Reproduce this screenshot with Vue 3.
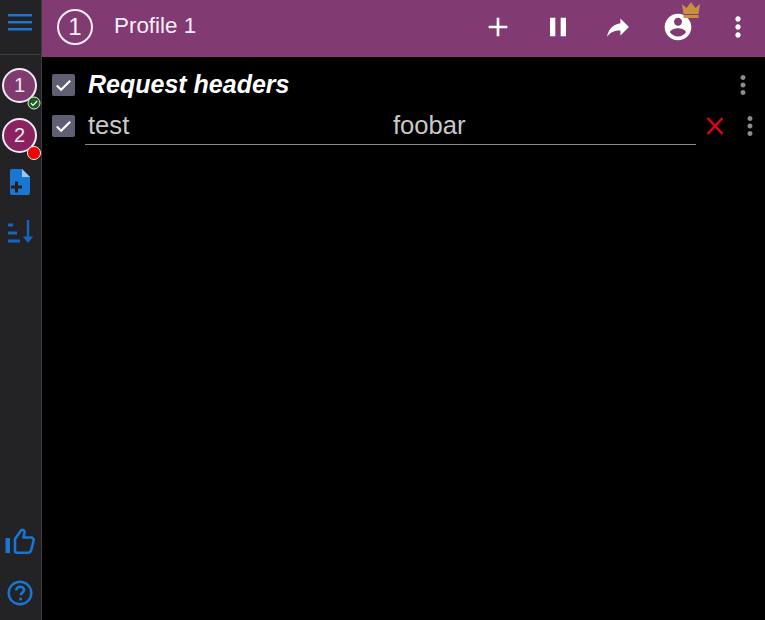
<script setup>
const rows = [{ name: 'test', value: 'foobar' }]
</script>

<template>
  <div class="app">
    <aside class="rail">
      <div class="rail-top">
        <svg class="menu" width="24" height="24" viewBox="0 0 24 24"><path d="M0 5h24v2.500H0zM0 12h24v2.500H0zM0 19h24v2.500H0z" fill="#1976d2"/></svg>
      </div>
      <div class="rail-list">
        <div class="pill one">1
          <span class="badge ok"><svg width="14" height="14" viewBox="0 0 14 14"><circle cx="7" cy="7" r="6" fill="#1b5e20" stroke="#e8e8e8" stroke-width="1"/><path d="M3.800 7.200l2.200 2.200 4.200-4.400" fill="none" stroke="#fff" stroke-width="1.200"/></svg></span>
        </div>
        <div class="pill two">2<span class="badge err"></span></div>
        <svg class="ico add" width="24" height="30" viewBox="0 0 24 30"><path d="M4 2h10l8 8v16a2 2 0 0 1-2 2H4a2 2 0 0 1-2-2V4a2 2 0 0 1 2-2z" fill="#1976d2"/><path d="M14 2l8 8h-8z" fill="#9ec6ee"/><path d="M7 14.500h3v4h4v3h-4v4H7v-4H3v-3h4z" fill="#202124"/></svg>
        <svg class="ico sort" width="28" height="24" viewBox="0 0 28 24"><path d="M2 3.500h5v3H2zM2 11.500h9v3H2zM2 19.500h12v3H2z" fill="#1565c0"/><path d="M20.800 0h2.400v16.500h4L22 23l-5.200-6.500h4z" fill="#1565c0"/></svg>
      </div>
      <div class="rail-bottom">
        <svg class="thumb" width="30" height="28" viewBox="0 0 30 28"><path d="M0.500 11h4.500v15H0.500z" fill="#1976d2"/><path d="M10 12l6-8.500c1.800-1.300 3.800-.2 3.500 2l-1 5h7.500c1.800 0 3 1.500 2.600 3.200l-2.400 9.300c-.4 1.600-1.500 2.800-3.200 2.800H12a2 2 0 0 1-2-2z" fill="none" stroke="#1976d2" stroke-width="2.600" stroke-linejoin="round"/></svg>
        <svg class="help" width="26" height="26" viewBox="0 0 26 26"><circle cx="13" cy="13" r="11.300" fill="none" stroke="#1976d2" stroke-width="2.400"/><path d="M9.300 10.500c0-2.300 1.700-3.800 3.900-3.800s3.800 1.400 3.800 3.300c0 2.600-3.300 2.900-3.300 5.300" fill="none" stroke="#1976d2" stroke-width="2.600"/><circle cx="13.600" cy="19" r="1.600" fill="#1976d2"/></svg>
      </div>
    </aside>
    <main class="main">
      <header class="bar">
        <div class="num">1</div>
        <div class="title">Profile 1</div>
        <div class="actions">
          <svg width="32" height="32" viewBox="0 0 24 24"><path d="M19 13h-6v6h-2v-6H5v-2h6V5h2v6h6z" fill="#fff"/></svg>
          <svg width="32" height="32" viewBox="0 0 24 24"><path d="M6 19h4V5H6zm8-14v14h4V5z" fill="#fff"/></svg>
          <svg width="32" height="32" viewBox="-1.200 -1.200 26.400 26.400"><path d="M14 9V5l7 7-7 7v-4.100c-5 0-8.500 1.600-11 5.100 1-5 4-10 11-11z" fill="#fff"/></svg>
          <span class="user">
            <svg width="32" height="32" viewBox="0 0 24 24"><path d="M12 2C6.480 2 2 6.480 2 12s4.480 10 10 10 10-4.480 10-10S17.520 2 12 2zm0 3c1.660 0 3 1.340 3 3s-1.340 3-3 3-3-1.340-3-3 1.340-3 3-3zm0 14.200c-2.500 0-4.710-1.280-6-3.220.03-1.990 4-3.080 6-3.080 1.990 0 5.970 1.090 6 3.080-1.290 1.940-3.500 3.220-6 3.220z" fill="#fff"/></svg>
            <svg class="crown" width="20" height="16" viewBox="0 0 20 16"><path d="M1 2l4.500 4L10 0l4.500 6L19 2l-1.500 10h-15z" fill="#c89040"/><path d="M2.500 13h15v3h-15z" fill="#c89040"/></svg>
          </span>
          <svg width="32" height="32" viewBox="0 0 24 24"><path d="M12 8c1.100 0 2-.9 2-2s-.9-2-2-2-2 .9-2 2 .9 2 2 2zm0 2c-1.100 0-2 .9-2 2s.9 2 2 2 2-.9 2-2-.9-2-2-2zm0 6c-1.100 0-2 .9-2 2s.9 2 2 2 2-.9 2-2-.9-2-2-2z" fill="#fff"/></svg>
        </div>
      </header>
      <section class="content">
        <div class="group-row">
          <span class="check"><svg width="24" height="24" viewBox="0 0 24 24"><path d="M5 12.500l4.500 4.500L19 7.500" fill="none" stroke="#fff" stroke-width="2.200"/></svg></span>
          <div class="group-title">Request headers</div>
          <svg class="more g" width="24" height="24" viewBox="2.400 2.400 19.200 19.200"><path d="M12 8c1.100 0 2-.9 2-2s-.9-2-2-2-2 .9-2 2 .9 2 2 2zm0 2c-1.100 0-2 .9-2 2s.9 2 2 2 2-.9 2-2-.9-2-2-2zm0 6c-1.100 0-2 .9-2 2s.9 2 2 2 2-.9 2-2-.9-2-2-2z" fill="#8c8c8c"/></svg>
        </div>
        <div v-for="r in rows" :key="r.name" class="row">
          <span class="check"><svg width="24" height="24" viewBox="0 0 24 24"><path d="M5 12.500l4.500 4.500L19 7.500" fill="none" stroke="#fff" stroke-width="2.200"/></svg></span>
          <div class="fields">
            <div class="name">{{ r.name }}</div>
            <div class="value">{{ r.value }}</div>
          </div>
          <svg class="del" width="24" height="24" viewBox="0 0 24 24"><path d="M4.500 4l15 16M19.500 4l-15 16" stroke="#e8001c" stroke-width="2.400" fill="none"/></svg>
          <svg class="more" width="24" height="24" viewBox="2.400 2.400 19.200 19.200"><path d="M12 8c1.100 0 2-.9 2-2s-.9-2-2-2-2 .9-2 2 .9 2 2 2zm0 2c-1.100 0-2 .9-2 2s.9 2 2 2 2-.9 2-2-.9-2-2-2zm0 6c-1.100 0-2 .9-2 2s.9 2 2 2 2-.9 2-2-.9-2-2-2z" fill="#8c8c8c"/></svg>
        </div>
      </section>
    </main>
  </div>
</template>

<style>
html, body { margin: 0; background: #000; }
</style>

<style scoped>
.app {
  display: flex;
  width: 765px;
  height: 620px;
  overflow: hidden;
  background: #000;
  font-family: "Liberation Sans", Arial, sans-serif;
}
.rail {
  width: 41px;
  flex: none;
  display: flex;
  flex-direction: column;
  background: #232326;
  border-right: 1px solid #3c3c40;
}
.rail-top {
  height: 55px;
  flex: none;
  display: flex;
  align-items: flex-start;
  justify-content: center;
  padding-top: 9px;
  box-sizing: border-box;
  border-bottom: 1px solid #3c3c40;
}
.menu { display: block; margin-left: -1px; }
.rail-list {
  flex: 1;
  display: flex;
  flex-direction: column;
  align-items: flex-start;
  padding-top: 13px;
}
.pill {
  position: relative;
  width: 31px;
  height: 31px;
  margin: 0 0 15px 2px;
  border: 2px solid #f3ebf3;
  border-radius: 50%;
  display: flex;
  align-items: center;
  justify-content: center;
  color: #f0e8f0;
  font-size: 20px;
}
.pill.one { background: #7f3a70; }
.pill.two { background: #8b2260; margin-bottom: 14px; }
.badge { position: absolute; display: block; }
.badge.ok { right: -6px; bottom: -9px; width: 14px; height: 14px; }
.badge.ok svg { display: block; }
.badge.err {
  right: -6px;
  bottom: -9px;
  width: 12px;
  height: 12px;
  background: #f00000;
  border-radius: 50%;
  border: 1px solid #eee;
}
.ico { display: block; }
.ico.add { margin: 0 0 23px 8px; }
.ico.sort { margin-left: 6px; }
.rail-bottom {
  display: flex;
  flex-direction: column;
  align-items: flex-start;
  padding-bottom: 14px;
  gap: 25px;
}
.thumb { display: block; margin-left: 5px; }
.help { display: block; margin-left: 7px; }
.main { flex: 1; min-width: 0; }
.bar {
  height: 57px;
  display: flex;
  align-items: center;
  box-sizing: border-box;
  background: #823a72;
  padding: 0 11px 3px 15px;
  color: #fff;
}
.num {
  width: 32px;
  height: 32px;
  border: 2px solid #f7eff7;
  border-radius: 50%;
  display: flex;
  align-items: center;
  justify-content: center;
  font-size: 24px;
  color: #f7eff7;
}
.title {
  margin-left: 21px;
  margin-bottom: 2px;
  font-size: 22.4px;
  color: #f7eff7;
}
.actions {
  margin-left: auto;
  display: flex;
  align-items: center;
  gap: 28px;
}
.actions > svg { display: block; }
.user { position: relative; display: block; width: 32px; height: 32px; }
.user svg { display: block; }
.user .crown { position: absolute; right: -7px; top: -9px; }
.content { padding-top: 10px; }
.group-row {
  display: flex;
  align-items: center;
  height: 36px;
  padding-left: 10px;
}
.check {
  width: 23px;
  height: 22px;
  flex: none;
  background: #5f5f73;
  border-radius: 2px;
  display: flex;
  align-items: center;
  justify-content: center;
}
.check svg { display: block; }
.group-title {
  margin-left: 13px;
  margin-bottom: 2px;
  font-size: 25px;
  font-weight: 700;
  font-style: italic;
  color: #fff;
  flex: 1;
}
.more { display: block; flex: none; }
.more.g { margin-right: 10px; }
.row {
  display: flex;
  align-items: center;
  height: 38px;
  padding-left: 10px;
  margin-top: 4px;
}
.fields {
  margin-left: 10px;
  width: 612px;
  height: 38px;
  display: flex;
  align-items: center;
  border-bottom: 1px solid #8a8a8a;
  box-sizing: border-box;
  font-size: 25.6px;
  color: #c8c8c8;
}
.name { width: 308px; padding-left: 3px; box-sizing: border-box; }
.value { flex: 1; }
.del { display: block; margin-left: 7px; flex: none; }
.row .more { margin-left: 11px; margin-right: 3px; }
</style>
